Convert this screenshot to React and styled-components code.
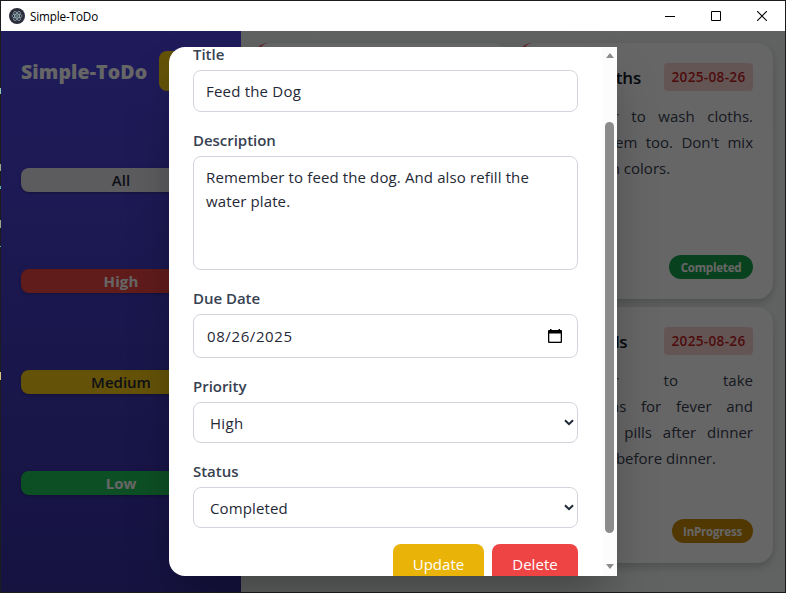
import React from "react";
import styled, { createGlobalStyle } from "styled-components";

const Global = createGlobalStyle`
  * { box-sizing: border-box; }
  body { margin: 0; overflow: hidden; background: #1c1b1f; font-family: "Open Sans", sans-serif; font-size: 15px; }
  button, input, textarea { font: inherit; }
`;

const Desktop = styled.div`
  width: 786px;
  height: 593px;
  padding: 1px;
  background:
    linear-gradient(#8fc7b0, #8fc7b0) 0 88px / 1px 6px no-repeat,
    linear-gradient(#9a8, #9a8) 0 164px / 1px 7px no-repeat,
    linear-gradient(#5fb6b0, #5fb6b0) 0 186px / 1px 3px no-repeat,
    linear-gradient(#9a8, #9a8) 0 220px / 1px 8px no-repeat,
    linear-gradient(#5fb6b0, #5fb6b0) 0 246px / 1px 1px no-repeat,
    linear-gradient(#d9c77a, #d9c77a) 0 372px / 1px 8px no-repeat,
    #1c1b1f;
`;

const Frame = styled.div`
  display: flex;
  flex-direction: column;
  height: 591px;
`;

const TitleBar = styled.header`
  display: flex;
  align-items: center;
  height: 30px;
  padding-left: 8px;
  background: #fff;
  color: #000;
  font-size: 11.7px;
`;

const AppName = styled.span`
  flex: 1;
  margin-left: 5px;
  letter-spacing: -0.14px;
`;

const WindowControl = styled.span`
  display: flex;
  align-items: center;
  justify-content: center;
  width: 46px;
  height: 30px;
`;

const Body = styled.div`
  position: relative;
  display: flex;
  flex: 1;
`;

const Sidebar = styled.aside`
  display: flex;
  flex-direction: column;
  width: 240px;
  padding: 20px;
  background: linear-gradient(#4f46e5, #3730a3);
`;

const Brand = styled.div`
  display: flex;
  align-items: center;
  justify-content: space-between;
  height: 40px;
`;

const BrandName = styled.h1`
  margin: 1px 0 0;
  color: #fff;
  font-size: 19.5px;
  font-weight: 800;
  letter-spacing: 0.12px;
`;

const AddButton = styled.button`
  width: 62px;
  height: 40px;
  border: 0;
  border-radius: 8px;
  background: #facc15;
  color: #111827;
`;

const Filters = styled.nav`
  display: flex;
  flex-direction: column;
  gap: 77px;
  margin-top: 77px;
`;

const Filter = styled.button`
  height: 24px;
  padding: 0;
  border: 0;
  border-radius: 8px;
  background: ${(p) => p.$bg};
  color: ${(p) => p.$color};
  font-weight: ${(p) => p.$weight || 600};
  font-size: 15px;
  line-height: 24px;
  letter-spacing: ${(p) => p.$track || "0"};
  box-shadow: 0 1px 3px rgba(0, 0, 0, 0.3);
`;

const Board = styled.main`
  display: grid;
  flex: 1;
  grid-template-columns: 256px 256px;
  grid-auto-rows: 256px;
  gap: 8px;
  padding: 12px;
  background: linear-gradient(135deg, #eef6f2, #f1f7f5);
`;

const Card = styled.article`
  display: flex;
  flex-direction: column;
  padding: 20px;
  border-left: 4px solid ${(p) => p.$accent};
  border-radius: 16px;
  background: #fff;
  box-shadow: 0 4px 8px rgba(0, 0, 0, 0.18);
`;

const CardHead = styled.div`
  display: flex;
  align-items: center;
  justify-content: space-between;
  height: 28px;
`;

const CardTitle = styled.h2`
  margin: 0;
  color: #111827;
  font-size: 17px;
  font-weight: 600;
  letter-spacing: ${(p) => p.$track || "-0.08px"};
  white-space: nowrap;
`;

const DateTag = styled.span`
  width: 89px;
  height: 28px;
  border-radius: 4px;
  background: #fbd5d5;
  color: #c01c1c;
  font-size: 13.6px;
  font-weight: 600;
  line-height: 28px;
  text-align: center;
  letter-spacing: 0.3px;
`;

const CardText = styled.div`
  margin-top: 12px;
  color: #374151;
  line-height: 26px;
`;

const Line = styled.div`
  white-space: nowrap;
  text-align: justify;
  text-align-last: ${(p) => (p.$last ? "left" : "justify")};
`;

const StatusTag = styled.span`
  align-self: flex-end;
  width: ${(p) => p.$width};
  height: 24px;
  margin-top: auto;
  border-radius: 12px;
  background: ${(p) => p.$bg};
  color: #fff;
  font-size: 11.6px;
  font-weight: 700;
  line-height: 25px;
  text-align: center;
  letter-spacing: -0.25px;
`;

const Overlay = styled.div`
  position: absolute;
  inset: 0;
  display: flex;
  align-items: center;
  justify-content: center;
  background: rgba(0, 0, 0, 0.6);
`;

const Modal = styled.section`
  display: flex;
  width: 448px;
  height: 529px;
  overflow: hidden;
  border-radius: 16px 0 0 16px;
  background: #fff;
  box-shadow: 0 25px 50px -12px rgba(0, 0, 0, 0.35);
`;

const Form = styled.form`
  display: flex;
  flex: 1;
  flex-direction: column;
  gap: 16px;
  padding: 0 24px;
`;

const Field = styled.div`
  display: flex;
  flex-direction: column;
  flex-shrink: 0;
`;

const FieldLabel = styled.span`
  height: ${(p) => p.$height || "28px"};
  color: #374151;
  font-size: 15px;
  font-weight: 600;
  line-height: ${(p) => p.$line || "25px"};
  letter-spacing: -0.03px;
`;

const Control = styled.div`
  display: flex;
  align-items: ${(p) => (p.$top ? "flex-start" : "center")};
  justify-content: space-between;
  height: ${(p) => p.$height};
  padding: ${(p) => p.$padding || "0 12px"};
  border: 1px solid #d1d5db;
  border-radius: 8px;
  color: #1f2937;
  line-height: 24px;
  letter-spacing: ${(p) => p.$track || "0.12px"};
`;

const Actions = styled.div`
  display: flex;
  flex-shrink: 0;
  justify-content: flex-end;
  gap: 8px;
`;

const Action = styled.button`
  width: ${(p) => p.$width};
  height: 40px;
  padding: 0;
  border: 0;
  border-radius: 8px;
  background: ${(p) => p.$bg};
  color: #fff;
  letter-spacing: 0.05px;
`;

const Scrollbar = styled.div`
  display: flex;
  flex-direction: column;
  align-items: center;
  width: 15px;
  padding: 6px 0 7px;
  background: #fcfcfc;
`;

const Arrow = styled.i`
  border: solid transparent;
  border-width: ${(p) => (p.$down ? "5px 4.5px 0" : "0 4.5px 5px")};
  ${(p) => (p.$down ? "border-top-color" : "border-bottom-color")}: #8b8b8b;
`;

const Thumb = styled.div`
  width: 9px;
  height: 411px;
  margin: 64px 0 auto;
  border-radius: 5px;
  background: #8b8b8b;
`;

const ElectronIcon = () => (
  <svg width="16" height="16" viewBox="0 0 16 16" fill="none">
    <circle cx="8" cy="8" r="8" fill="#2b2e3a" />
    <g stroke="#b5d5dc" strokeWidth=".65" opacity=".85">
      <ellipse cx="8" cy="8" rx="5.2" ry="2" />
      <ellipse cx="8" cy="8" rx="5.2" ry="2" transform="rotate(60 8 8)" />
      <ellipse cx="8" cy="8" rx="5.2" ry="2" transform="rotate(120 8 8)" />
    </g>
    <circle cx="8" cy="8" r=".8" fill="#b5d5dc" />
  </svg>
);

const Chevron = () => (
  <svg width="10" height="7" viewBox="0 0 10 7" fill="none">
    <path d="M1 1.2 5 5.2 9 1.2" stroke="#1f2937" strokeWidth="2" />
  </svg>
);

const CalendarIcon = () => (
  <svg width="14" height="15" viewBox="0 0 14 15">
    <path d="M1 1h1V0h1.5v1h7V0H12v1h1q1 0 1 1v11q0 1-1 1H1q-1 0-1-1V2Q0 1 1 1Z" fill="#000" />
    <path d="M1.3 4.5h11.4v8.2H1.3Z" fill="#fff" />
  </svg>
);

const filters = [
  { name: "All", bg: "#e5e7eb", color: "#1f2937" },
  { name: "High", bg: "#ef4444", color: "#fff", weight: 700, track: "0.1px" },
  { name: "Medium", bg: "#facc15", color: "#1f2937" },
  { name: "Low", bg: "#22c55e", color: "#fff", weight: 700 },
];

const tasks = [
  { accent: "#ef4444" },
  {
    accent: "#ef4444",
    title: "Wash Cloths",
    lines: ["Remember to wash cloths.", "Include them too. Don't mix", "with cotton colors."],
    status: "Completed",
    bg: "#16a34a",
    width: "84px",
  },
  { accent: "#ef4444" },
  {
    accent: "#ef4444",
    title: "Take 2 Pills",
    track: "-0.35px",
    lines: ["Remember to take", "medications for fever and", "vitamin C pills after dinner", "and tablet before dinner."],
    status: "InProgress",
    bg: "#ca8a04",
    width: "81px",
  },
];

const TaskCard = ({ accent, title, track, lines, status, bg, width }) => (
  <Card $accent={accent}>
    {title && (
      <>
        <CardHead>
          <CardTitle $track={track}>{title}</CardTitle>
          <DateTag>2025-08-26</DateTag>
        </CardHead>
        <CardText>
          {lines.map((line, i) => (
            <Line key={line} $last={i === lines.length - 1}>{line}</Line>
          ))}
        </CardText>
        <StatusTag $bg={bg} $width={width}>{status}</StatusTag>
      </>
    )}
  </Card>
);

export default function App() {
  return (
    <Desktop>
      <Global />
      <Frame>
        <TitleBar>
          <ElectronIcon />
          <AppName>Simple-ToDo</AppName>
          <WindowControl>
            <svg width="10" height="10"><path d="M0 5.5h10" stroke="#000" /></svg>
          </WindowControl>
          <WindowControl>
            <svg width="10" height="10"><path d="M.5.5h9v9h-9Z" stroke="#000" fill="none" /></svg>
          </WindowControl>
          <WindowControl>
            <svg width="10" height="10"><path d="m0 0 10 10M10 0 0 10" stroke="#000" strokeWidth="1.1" /></svg>
          </WindowControl>
        </TitleBar>
        <Body>
          <Sidebar>
            <Brand>
              <BrandName>Simple-ToDo</BrandName>
              <AddButton />
            </Brand>
            <Filters>
              {filters.map((f) => (
                <Filter key={f.name} $bg={f.bg} $color={f.color} $weight={f.weight} $track={f.track}>{f.name}</Filter>
              ))}
            </Filters>
          </Sidebar>
          <Board>
            {tasks.map((task, i) => <TaskCard key={i} {...task} />)}
          </Board>
          <Overlay>
            <Modal>
              <Form>
                <Field>
                  <FieldLabel $height="23px" $line="15px">Title</FieldLabel>
                  <Control $height="42px" $track="0.2px">Feed the Dog</Control>
                </Field>
                <Field>
                  <FieldLabel>Description</FieldLabel>
                  <Control $height="114px" $top $padding="8px 12px">
                    Remember to feed the dog. And also refill the<br />water plate.
                  </Control>
                </Field>
                <Field>
                  <FieldLabel>Due Date</FieldLabel>
                  <Control $height="44px" $padding="0 15px 0 13px" $track="0.6px"><span>08/26/2025</span><CalendarIcon /></Control>
                </Field>
                <Field>
                  <FieldLabel>Priority</FieldLabel>
                  <Control $height="41px" $padding="0 3px 0 16px" $track="0.3px"><span>High</span><Chevron /></Control>
                </Field>
                <Field>
                  <FieldLabel>Status</FieldLabel>
                  <Control $height="41px" $padding="0 3px 0 16px"><span>Completed</span><Chevron /></Control>
                </Field>
                <Actions>
                  <Action type="button" $width="91px" $bg="#eab308">Update</Action>
                  <Action type="button" $width="86px" $bg="#ef4444">Delete</Action>
                </Actions>
              </Form>
              <Scrollbar>
                <Arrow />
                <Thumb />
                <Arrow $down />
              </Scrollbar>
            </Modal>
          </Overlay>
        </Body>
      </Frame>
    </Desktop>
  );
}
